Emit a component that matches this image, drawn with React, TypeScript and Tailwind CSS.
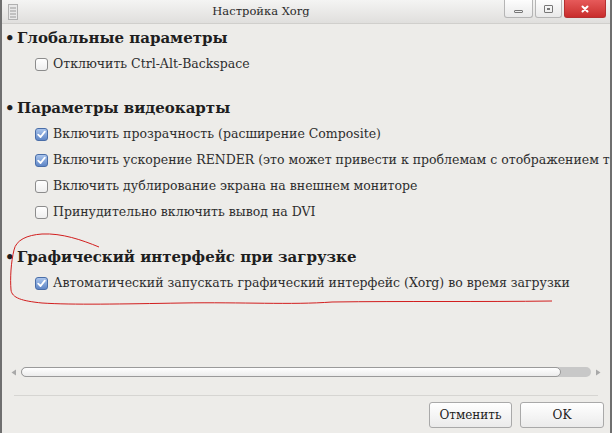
import React from "react";

const serif = { fontFamily: '"DejaVu Serif", "Liberation Serif", serif' };

const Check = ({ on }: { on?: boolean }) =>
  on ? (
    <span className="w-[13px] h-[13px] rounded-[3px] border border-[#4a6ea8] bg-gradient-to-b from-[#a9c4ec] to-[#5f86c6] flex items-center justify-center shrink-0">
      <svg width="9" height="9" viewBox="0 0 9 9">
        <path d="M1.2 4.6 L3.6 7 L7.8 1.6" fill="none" stroke="#fff" strokeWidth="1.8" strokeLinecap="round" strokeLinejoin="round" />
      </svg>
    </span>
  ) : (
    <span className="w-[13px] h-[13px] rounded-[3px] border border-[#8c8c8c] bg-gradient-to-b from-[#ffffff] to-[#eeeeee] shrink-0" />
  );

const Row = ({ on, text }: { on?: boolean; text: string }) => (
  <div className="flex items-center gap-[5px] h-[26px] pl-[33px] whitespace-nowrap text-[12.5px] text-[#2e2e2e]">
    <Check on={on} />
    <span>{text}</span>
  </div>
);

const Heading = ({ text }: { text: string }) => (
  <div className="flex items-center h-[26px] pl-[3px] whitespace-nowrap text-[15px] font-bold text-[#1e1e1e]">
    <span className="w-[12px]">•</span>
    <span>{text}</span>
  </div>
);

export default function App() {
  return (
    <div className="w-[612px] h-[433px] bg-[#edece9] border-x-2 border-[#6f6f6f] flex flex-col overflow-hidden relative" style={serif}>
      {/* title bar */}
      <div className="h-[24px] shrink-0 bg-gradient-to-b from-[#f4f4f3] to-[#e0dfdd] border-b border-[#d0cfcc] flex items-center relative">
        <svg className="ml-[6px]" width="10" height="16" viewBox="0 0 10 16">
          <rect x="0.5" y="0.5" width="9" height="15" fill="#e8e8e8" stroke="#b0b0b0" />
          <path d="M2 4h6M2 7h6M2 10h6M2 13h6" stroke="#9a9a9a" strokeWidth="1" />
        </svg>
        <div className="flex-1 text-center text-[11.5px] text-[#2a2a2a]">Настройка Xorg</div>
        <div className="flex self-start h-[18px] mr-[4px]">
          <div className="w-[29px] h-[18px] border border-[#b5b5b5] border-t-0 rounded-b-[3px] bg-gradient-to-b from-[#fdfdfd] to-[#e9e9e9] flex items-end justify-center pb-[4px]">
            <span className="w-[9px] h-[3px] border border-[#777] rounded-[1px]" />
          </div>
          <div className="w-[27px] h-[18px] ml-[2px] border border-[#b5b5b5] border-t-0 rounded-b-[3px] bg-gradient-to-b from-[#fdfdfd] to-[#e9e9e9] flex items-center justify-center">
            <span className="w-[9px] h-[8px] border border-[#777] rounded-[1px] flex items-center justify-center">
              <span className="w-[3px] h-[2px] border border-[#777]" />
            </span>
          </div>
          <div className="w-[42px] h-[18px] ml-[2px] border border-[#b53030] border-t-0 rounded-b-[3px] bg-gradient-to-b from-[#e65a5a] to-[#c92b2b] flex items-center justify-center">
            <svg width="8" height="8" viewBox="0 0 8 8">
              <path d="M1.5 1.5l5 5M6.5 1.5l-5 5" stroke="#fff" strokeWidth="2" strokeLinecap="round" />
            </svg>
          </div>
        </div>
      </div>

      {/* content */}
      <div className="flex flex-col pt-[1px]">
        <Heading text="Глобальные параметры" />
        <Row text="Отключить Ctrl-Alt-Backspace" />
        <div className="h-[18px]" />
        <Heading text="Параметры видеокарты" />
        <Row on text="Включить прозрачность (расширение Composite)" />
        <Row on text="Включить ускорение RENDER (это может привести к проблемам с отображением текста)" />
        <Row text="Включить дублирование экрана на внешнем мониторе" />
        <Row text="Принудительно включить вывод на DVI" />
        <div className="h-[19px]" />
        <Heading text="Графический интерфейс при загрузке" />
        <Row on text="Автоматический запускать графический интерфейс (Xorg) во время загрузки" />
      </div>

      <div className="flex-1" />

      {/* horizontal scrollbar */}
      <div className="flex items-center h-[14px] pl-[9px] pr-[9px] gap-[4px]">
        <svg width="6" height="7" viewBox="0 0 6 7"><path d="M5 0.5 L0.5 3.5 L5 6.5Z" fill="#a8a8a8" /></svg>
        <div className="flex-1 h-[10px] rounded-full bg-[#c8c8c8] flex">
          <div className="w-[540px] h-[10px] rounded-full border border-[#9a9a9a] bg-gradient-to-b from-[#ffffff] to-[#ececec]" />
        </div>
        <svg width="6" height="7" viewBox="0 0 6 7"><path d="M1 0.5 L5.5 3.5 L1 6.5Z" fill="#a8a8a8" /></svg>
      </div>

      <div className="mt-[16px] mx-[12px] h-px bg-[#d6d5d2]" />

      {/* buttons */}
      <div className="flex justify-end gap-[8px] pr-[6px] pt-[6px] pb-[5px] text-[12px] text-[#222]">
        <button className="w-[83px] h-[26px] rounded-[3px] border border-[#a9a9a9] bg-gradient-to-b from-[#ffffff] to-[#ebebeb]">Отменить</button>
        <button className="w-[84px] h-[26px] rounded-[3px] border border-[#a9a9a9] bg-gradient-to-b from-[#ffffff] to-[#ebebeb]">OK</button>
      </div>

      {/* red hand-drawn annotation */}
      <svg className="absolute left-0 top-0 pointer-events-none" width="612" height="433" viewBox="0 0 612 433">
        <path
          d="M97 247 C80 240 60 233 40 234 C25 235 14 240 12 250 C9 262 8 278 9 290 C10 298 20 301 40 303 C70 305 120 304 180 303 C240 302 290 305 330 302 C400 301 480 302 550 301"
          fill="none"
          stroke="#d21e1e"
          strokeWidth="1"
        />
      </svg>
    </div>
  );
}
